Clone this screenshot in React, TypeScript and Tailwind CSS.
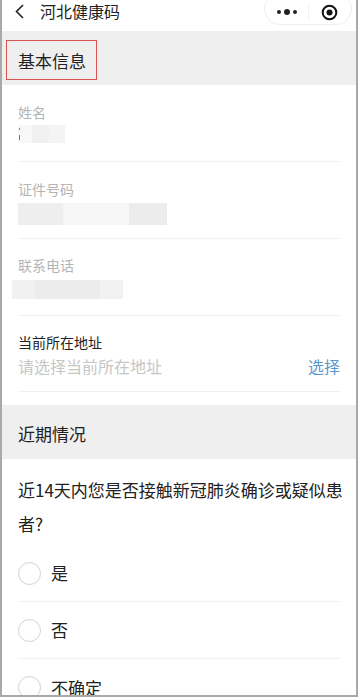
import React from "react";

const font = { fontFamily: '"Noto Sans CJK SC", "Noto Sans", sans-serif' };

function Field({ label, children, pt, mb }: { label: string; children: React.ReactNode; pt: string; mb: string }) {
  return (
    <div className={`mx-4 border-b border-[#f1f1f1] ${pt}`}>
      <div className="text-[14px] leading-[20px] text-[#b4b4b4]">{label}</div>
      <div className={mb}>{children}</div>
    </div>
  );
}

function Radio({ label, last }: { label: string; last?: boolean }) {
  return (
    <div className={`mx-4 flex h-[57px] items-center gap-[10px] ${last ? "" : "border-b border-[#f1f1f1]"}`}>
      <div className="h-[23px] w-[23px] rounded-full border border-[#d2d2d2] bg-white" />
      <span className="text-[17px] leading-[24px] text-[#222]">{label}</span>
    </div>
  );
}

export default function App() {
  return (
    <div className="h-[699px] w-[358px] overflow-hidden bg-white" style={font}>
      <div className="h-[697px] overflow-hidden border-x-2 border-b-2 border-[#a9a9a9]">
        {/* Nav bar */}
        <div className="flex h-[31px] items-start bg-white">
          <svg className="ml-[12px] mt-[4px]" width="12" height="15" viewBox="0 0 12 15">
            <polyline points="9,1 2.5,7.5 9,14" fill="none" stroke="#222" strokeWidth="1.6" />
          </svg>
          <span className="ml-[14px] mt-[1px] text-[16px] leading-[20px] text-[#1e1e1e]">河北健康码</span>
          <div className="ml-auto mr-[4px] -mt-[7px] flex h-[32px] w-[88px] items-center rounded-full border border-[#f0f0f0]">
            <div className="flex w-[44px] items-center justify-center gap-[3px] pt-[6px]">
              <span className="h-[4px] w-[4px] rounded-full bg-[#222]" />
              <span className="h-[6px] w-[6px] rounded-full bg-[#222]" />
              <span className="h-[4px] w-[4px] rounded-full bg-[#222]" />
            </div>
            <div className="h-[18px] w-px bg-[#f2f2f2] mt-[6px]" />
            <div className="flex w-[43px] items-center justify-center pt-[6px]">
              <svg width="17" height="17" viewBox="0 0 17 17">
                <circle cx="8.5" cy="8.5" r="6.8" fill="none" stroke="#111" strokeWidth="2" />
                <circle cx="8.5" cy="8.5" r="3" fill="#111" />
              </svg>
            </div>
          </div>
        </div>

        {/* 基本信息 header */}
        <div className="h-[54px] bg-[#efefef] pl-[4px] pt-[9px]">
          <div className="flex h-[40px] w-[91px] items-center border border-[#d9534f] pl-[11px] pt-[2px]">
            <span className="text-[17px] leading-[24px] text-[#222]">基本信息</span>
          </div>
        </div>

        {/* Fields */}
        <Field label="姓名" pt="pt-[17px]" mb="mt-[3px] mb-[18px]">
          <div className="flex h-[18px] items-stretch">
            <div className="relative w-[14px] bg-[#f8f8f8]">
              <span className="absolute left-[1px] top-[3px] h-[2px] w-[1px] bg-[#888]" />
              <span className="absolute left-[1px] top-[10px] h-[5px] w-[1px] bg-[#777]" />
            </div>
            <div className="w-[17px] bg-[#f1f1f1]" />
            <div className="w-[16px] bg-[#f4f4f4]" />
          </div>
        </Field>

        <Field label="证件号码" pt="pt-[17px]" mb="mt-[4px] mb-[13px]">
          <div className="flex h-[22px] items-stretch">
            <div className="w-[45px] bg-[#eeeeee]" />
            <div className="w-[66px] bg-[#f6f6f6]" />
            <div className="w-[38px] bg-[#ececec]" />
          </div>
        </Field>

        <Field label="联系电话" pt="pt-[16px]" mb="mt-[5px] mb-[16px]">
          <div className="-ml-[6px] flex h-[19px] items-stretch">
            <div className="w-[23px] bg-[#f1f1f1]" />
            <div className="w-[65px] bg-[#ececec]" />
            <div className="w-[23px] bg-[#f2f2f2]" />
          </div>
        </Field>

        <div className="mx-4 border-b border-[#f1f1f1] pt-[16px] pb-[14px]">
          <div className="text-[14px] leading-[20px] text-[#222]">当前所在地址</div>
          <div className="mt-[3px] flex items-center justify-between">
            <span className="text-[16px] leading-[22px] text-[#c6c6c6]">请选择当前所在地址</span>
            <span className="text-[16px] leading-[22px] text-[#5b97cf]">选择</span>
          </div>
        </div>

        <div className="h-[13px]" />

        {/* 近期情况 header */}
        <div className="h-[54px] bg-[#efefef] pl-4 pt-[17px]">
          <span className="text-[17px] leading-[24px] text-[#222]">近期情况</span>
        </div>

        <div className="pl-4 pr-[4px] pt-[14px] text-[17px] leading-[34px] text-[#222]">
          近14天内您是否接触新冠肺炎确诊或疑似患者?
        </div>
        <div className="h-[4px]" />
        <Radio label="是" />
        <Radio label="否" />
        <Radio label="不确定" last />
      </div>
    </div>
  );
}
